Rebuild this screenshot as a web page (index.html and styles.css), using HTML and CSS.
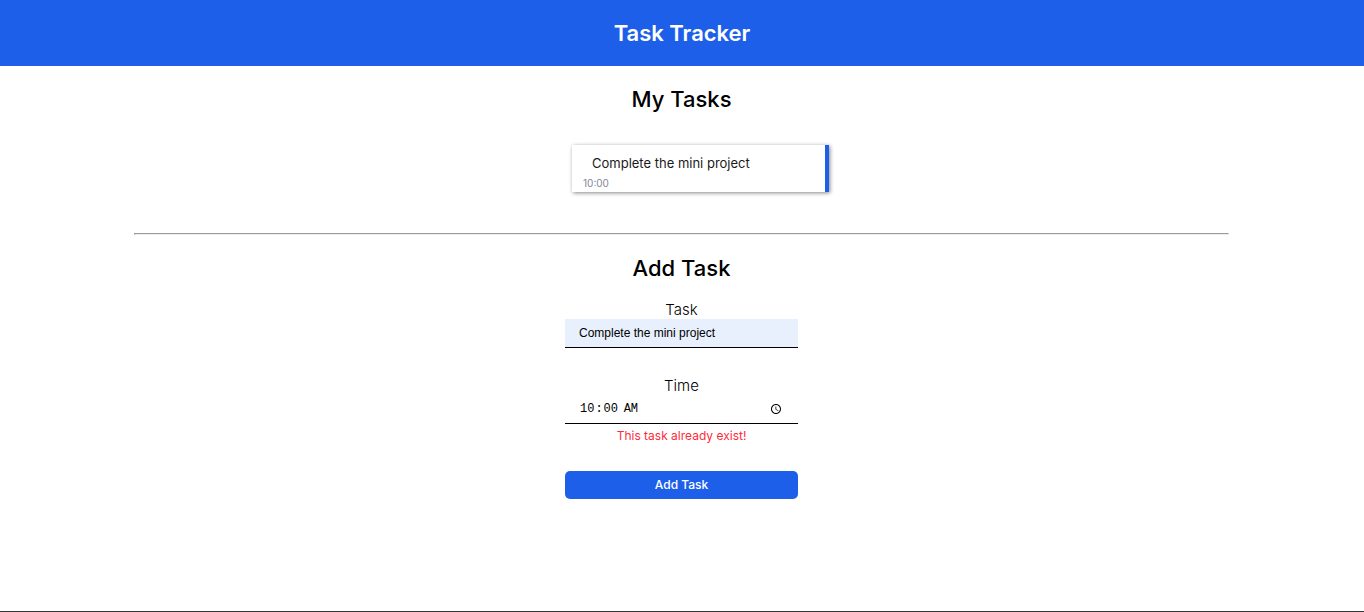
FILE: index.html
```html
<!DOCTYPE html>
<html lang="en">
<head>
<meta charset="utf-8">
<title>Task Tracker</title>
<link rel="stylesheet" href="styles.css">
</head>
<body>
<header class="header"><h1 class="brand">Task Tracker</h1></header>
<main class="main">
  <section class="tasks">
    <h2 class="title">My Tasks</h2>
    <ul class="task-list">
      <li class="task"><p class="task-name">Complete the mini project</p><time class="task-time">10:00</time></li>
    </ul>
  </section>
  <hr class="divider">
  <section>
    <h2 class="title">Add Task</h2>
    <form class="form">
      <label class="label" for="task">Task</label>
      <input class="field field-filled" id="task" type="text" value="Complete the mini project">
      <label class="label label-time" for="time">Time</label>
      <input class="field field-time" id="time" type="time" value="10:00">
      <p class="error">This task already exist!</p>
      <button class="submit" type="button">Add Task</button>
    </form>
  </section>
</main>
</body>
</html>
```
FILE: styles.css
```css
* { box-sizing: border-box; margin: 0; padding: 0; }
body {
  font-family: Inter, "Liberation Sans", sans-serif;
  color: #000;
  background: #fff;
  min-height: 100vh;
  border-bottom: 1px solid #333;
}
.header { background: #1d5fe9; color: #fff; padding: 18px; text-align: center; }
.brand { font-size: 22px; line-height: 30px; font-weight: 600; }
.main { margin: 0 135px 0 134px; padding-top: 18px; }
.title { font-size: 22px; line-height: 30px; font-weight: 500; text-align: center; }
.task-list { list-style: none; padding: 31px 0 41px 38px; }
.task {
  width: 257px;
  margin: 0 auto;
  padding: 9px 11px 0;
  border-right: 4px solid #1d5fe9;
  box-shadow: 1px 1px 4px #888;
}
.task-name { font-size: 13px; line-height: 18px; padding-left: 9px; color: #1a1a1a; }
.task-time { display: block; padding-top: 2px; font-size: 10px; line-height: 18px; color: #7f8799; }
.divider { border: 1px solid; border-color: #9a9a9a #eee #eee #9a9a9a; margin-bottom: 18px; }
.form { width: 233px; margin: 18px auto 0; display: flex; flex-direction: column; }
.label { font-size: 15px; line-height: 18px; font-weight: 300; text-align: center; }
.label-time { margin-top: 29px; }
.field {
  width: 100%;
  height: 29px;
  padding: 0 14px;
  border: 0;
  border-bottom: 1px solid #000;
  border-radius: 0;
  background: #fff;
  color: #000;
  font: 12px "Liberation Sans", Arial, sans-serif;
}
.field-filled { background: #e8f0fe; }
.field-time { padding-right: 12px; font-family: "Liberation Mono", monospace; }
.error { color: #ff2a3a; font-size: 12px; line-height: 24px; text-align: center; }
.submit {
  height: 28px;
  margin-top: 23px;
  padding-bottom: 2px;
  border: 0;
  border-radius: 5px;
  background: #1d5fe9;
  color: #fff;
  font: 500 12px Inter, "Liberation Sans", sans-serif;
}
```
